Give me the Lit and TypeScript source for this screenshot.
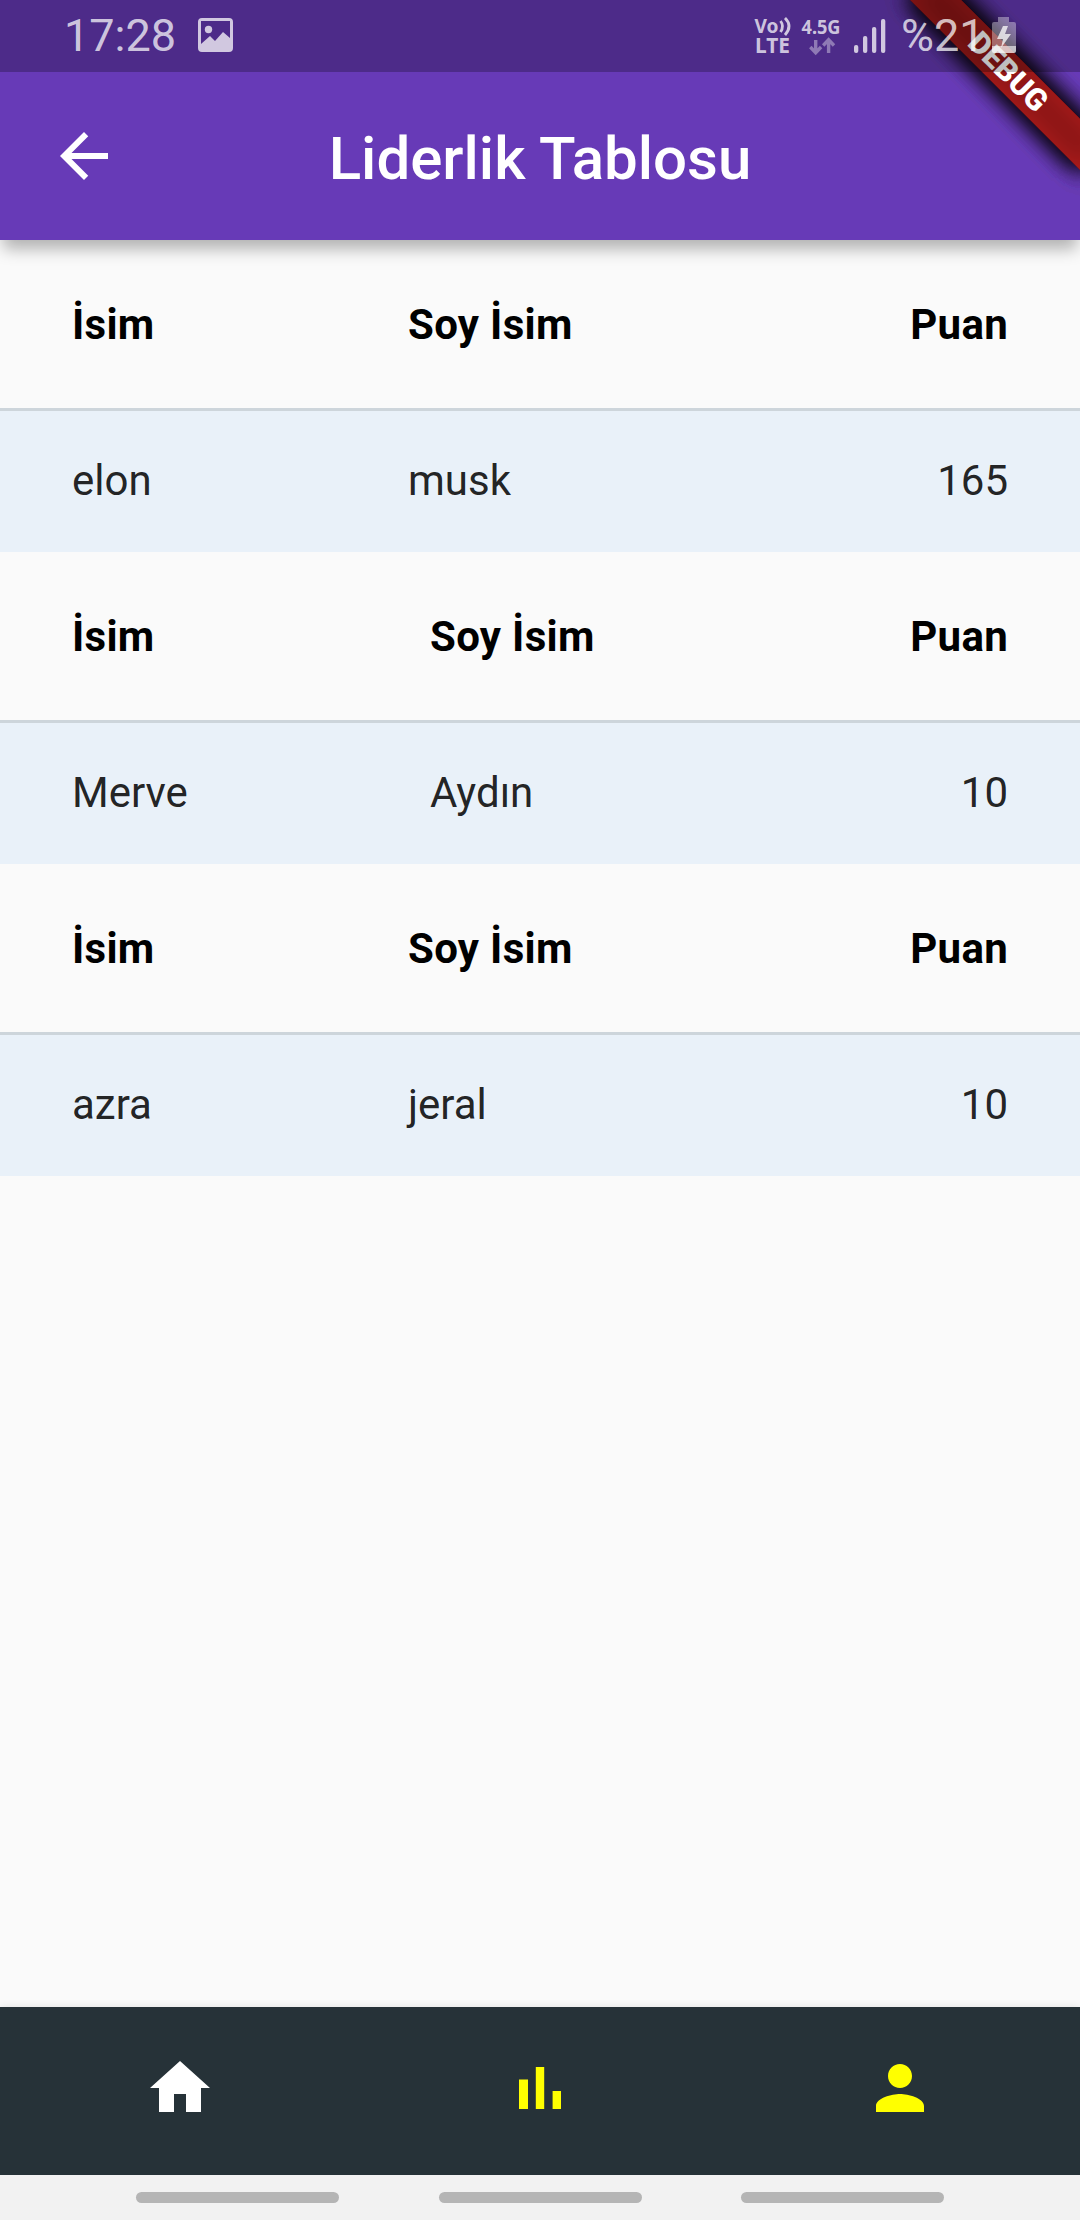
import { LitElement, html, css } from "lit";
import { customElement, property } from "lit/decorators.js";

interface Entry {
  name: string;
  surname: string;
  points: number;
  wide?: boolean;
}

const ENTRIES: Entry[] = [
  { name: "elon", surname: "musk", points: 165 },
  { name: "Merve", surname: "Aydın", points: 10, wide: true },
  { name: "azra", surname: "jeral", points: 10 },
];

const ICONS = {
  back: "M20 11H7.83l5.59-5.59L12 4l-8 8 8 8 1.41-1.41L7.83 13H20v-2z",
  home: "M10 20v-6h4v6h5v-8h3L12 3 2 12h3v8z",
  chart: "M5 9.2h3V19H5zM10.6 5h2.8v14h-2.8zm5.6 8H19v6h-2.8z",
  person:
    "M12 12c2.21 0 4-1.79 4-4s-1.79-4-4-4-4 1.79-4 4 1.79 4 4 4zm0 2c-2.67 0-8 1.34-8 4v2h16v-2c0-2.66-5.33-4-8-4z",
};

@customElement("md-icon")
class MdIcon extends LitElement {
  @property() name: keyof typeof ICONS = "home";
  static styles = css`
    :host { display: block; width: 72px; height: 72px; }
    svg { display: block; width: 100%; height: 100%; fill: currentColor; }
  `;
  render() {
    return html`<svg viewBox="0 0 24 24"><path d=${ICONS[this.name]}></path></svg>`;
  }
}

@customElement("status-bar")
class StatusBar extends LitElement {
  static styles = css`
    :host {
      display: flex;
      box-sizing: border-box;
      height: 72px;
      padding: 0 64px 0 64px;
      justify-content: space-between;
      background: rgba(0, 0, 0, 0.25);
      color: rgba(255, 255, 255, 0.74);
      font-family: Roboto, sans-serif;
    }
    .left, .right { display: flex; }
    .clock { font-size: 45px; line-height: 72px; width: 134px; }
    .picture { width: 35px; height: 34px; margin-top: 18px; }
    .volte { width: 38px; height: 40px; margin-top: 16px; }
    .network { width: 40px; height: 40px; margin: 16px 0 0 9px; }
    .signal { width: 32px; height: 35px; margin: 19px 0 0 12px; }
    .percent { font-size: 45px; line-height: 72px; margin-left: 15px; width: 91px; }
    .battery { width: 24px; height: 36px; margin-top: 17px; }
    svg { display: block; fill: currentColor; overflow: visible; }
    text { font-family: "Noto Sans", sans-serif; font-weight: 700; }
    .stroke { fill: none; stroke: currentColor; }
  `;
  render() {
    return html`
      <div class="left">
        <span class="clock">17:28</span>
        <svg class="picture" viewBox="0 0 35 34">
          <path fill-rule="evenodd" d="M4 0H31Q35 0 35 4V30Q35 34 31 34H4Q0 34 0 30V4Q0 0 4 0ZM3 3V26L12 18 17 23 25 14 32 20V3Z"></path>
          <circle cx="10.5" cy="11.500" r="3.700"></circle>
        </svg>
      </div>
      <div class="right">
        <svg class="volte" viewBox="0 0 38 40">
          <text x="-0.5" y="16.700" font-size="20" textLength="24" lengthAdjust="spacingAndGlyphs">Vo</text>
          <path class="stroke" d="M25.500 5Q29.500 10 25.500 16M30 2Q38 10 30 19" stroke-width="2.800"></path>
          <text x="0" y="37" font-size="21.500" textLength="35" lengthAdjust="spacingAndGlyphs">LTE</text>
        </svg>
        <svg class="network" viewBox="0 0 40 40">
          <text x="-0.5" y="18" font-size="20" textLength="39" lengthAdjust="spacingAndGlyphs">4.5G</text>
          <path class="stroke" opacity=".5" stroke-width="3.400" d="M13.700 24V37M8.300 31l5.400 5.700 5.400-5.700M26.600 37V24M21.200 29.500l5.400-5.700 5.400 5.700"></path>
        </svg>
        <svg class="signal" viewBox="0 0 32 35">
          <rect x="0" y="26" width="4.300" height="8" rx="2"></rect>
          <rect x="9" y="17" width="4.300" height="17" rx="2"></rect>
          <rect x="18" y="8" width="4.300" height="26" rx="2"></rect>
          <rect x="27" y="0" width="4.300" height="34" rx="2"></rect>
        </svg>
        <span class="percent">%21</span>
        <svg class="battery" viewBox="0 0 24 36">
          <path opacity=".5" d="M6 0H17V5H22Q24 5 24 7V29H0V7Q0 5 2 5H6Z"></path>
          <path d="M0 29H24V34Q24 36 22 36H2Q0 36 0 34Z"></path>
          <path d="M11 9H16L13 17H19L9 31 11 22H5Z"></path>
        </svg>
      </div>
    `;
  }
}

const RIBBON_LAYERS = [1, 2, 3, 4, 5];

@customElement("debug-banner")
class DebugBanner extends LitElement {
  static styles = css`
    :host {
      position: absolute;
      top: 0;
      right: -120px;
      width: 240px;
      height: 120px;
      transform-origin: 50% 0;
      transform: rotate(45deg);
      pointer-events: none;
    }
    .shade, .band, .label { position: absolute; left: 0; top: 84px; width: 240px; height: 36px; }
    .shade { background: rgba(0, 0, 0, 0.5); filter: blur(12px); }
    .band { background: rgba(183, 28, 28, 0.627); }
    .label {
      color: #fff;
      font: 900 30.6px/36px Roboto, sans-serif;
      text-align: center;
    }
  `;
  render() {
    return html`
      ${RIBBON_LAYERS.map(() => html`<div class="shade"></div><div class="band"></div>`)}
      <div class="label">DEBUG</div>
    `;
  }
}

@customElement("score-table")
class ScoreTable extends LitElement {
  @property({ attribute: false }) entry!: Entry;
  static styles = css`
    :host { display: block; font: 42px Roboto, sans-serif; }
    .row {
      display: grid;
      grid-template-columns: 336px 1fr auto;
      align-items: center;
      box-sizing: border-box;
      padding: 0 72px;
    }
    .row.wide { grid-template-columns: 358px 1fr auto; }
    .head { height: 168px; font-weight: 700; letter-spacing: 0.3px; color: #000; }
    .data {
      height: 144px;
      background: #e9f1f9;
      box-shadow: inset 0 3px #cdd5db;
      color: rgba(0, 0, 0, 0.87);
    }
  `;
  render() {
    const { name, surname, points, wide } = this.entry;
    const w = wide ? "wide" : "";
    return html`
      <div class="row head ${w}"><span>İsim</span><span>Soy İsim</span><span>Puan</span></div>
      <div class="row data ${w}"><span>${name}</span><span>${surname}</span><span>${points}</span></div>
    `;
  }
}

@customElement("app-root")
class AppRoot extends LitElement {
  static styles = css`
    :host {
      display: flex;
      flex-direction: column;
      width: 1080px;
      height: 2220px;
      overflow: hidden;
      background: #fafafa;
      font-family: Roboto, sans-serif;
    }
    header {
      position: relative;
      z-index: 1;
      background: #673ab7;
      box-shadow: 0 12px 15px -3px rgba(0, 0, 0, 0.29);
    }
    status-bar { position: relative; z-index: 2; }
    .bar {
      display: grid;
      grid-template-columns: 72px 1fr 72px;
      align-items: center;
      height: 168px;
      padding: 0 48px;
      color: #fff;
    }
    h1 { margin: 0; padding-top: 5px; font-size: 60px; line-height: 70px; font-weight: 500; text-align: center; }
    main { flex: 1; }
    nav {
      position: relative;
      display: grid;
      grid-template-columns: repeat(3, 1fr);
      justify-items: center;
      box-sizing: border-box;
      height: 168px;
      padding-top: 45px;
      background: #263238;
      color: #ff0;
      box-shadow: 0 0 8px rgba(0, 0, 0, 0.1);
    }
    .home { color: #fff; }
    footer {
      position: relative;
      display: flex;
      justify-content: center;
      gap: 99.5px;
      box-sizing: border-box;
      height: 45px;
      padding-top: 17px;
      background: #f2f2f2;
    }
    .pill { width: 203px; height: 11px; border-radius: 5.5px; background: #b5b5b5; }
  `;
  render() {
    return html`
      <header>
        <status-bar></status-bar>
        <div class="bar"><md-icon name="back"></md-icon><h1>Liderlik Tablosu</h1></div>
        <debug-banner></debug-banner>
      </header>
      <main>${ENTRIES.map((e) => html`<score-table .entry=${e}></score-table>`)}</main>
      <nav>
        <md-icon class="home" name="home"></md-icon>
        <md-icon name="chart"></md-icon>
        <md-icon name="person"></md-icon>
      </nav>
      <footer><i class="pill"></i><i class="pill"></i><i class="pill"></i></footer>
    `;
  }
}
